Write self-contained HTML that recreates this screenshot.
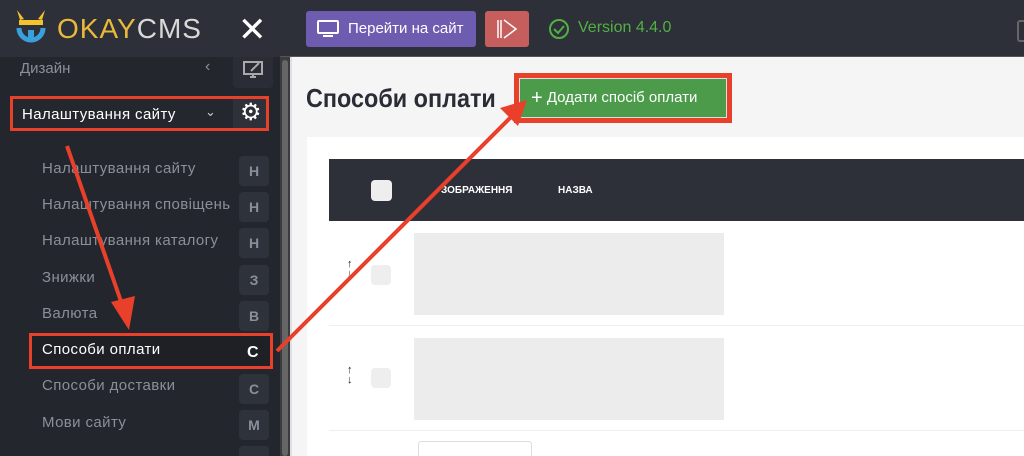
<!DOCTYPE html>
<html><head><meta charset="utf-8"><style>
*{margin:0;padding:0;box-sizing:border-box}
html,body{width:1024px;height:456px;overflow:hidden}
body{background:#f5f5f5;font-family:"Liberation Sans","DejaVu Sans",sans-serif;position:relative}
.abs{position:absolute}
#side{left:0;top:0;width:280px;height:456px;background:#23262d}
#top{left:280px;top:0;width:744px;height:57px;background:#2d3039;border-bottom:1px solid #555}
.item{position:absolute;left:42px;font-size:15px;letter-spacing:0.4px;color:#8a8f9a}
.key{position:absolute;left:239px;width:30px;height:30px;background:#2e323b;border-radius:4px;color:#8a8f9a;font-weight:bold;font-size:14px;text-align:center;line-height:30px}
</style></head><body>
<div id="side" class="abs"></div>
<div class="abs" style="left:0;top:0;width:280px;height:57px;background:#2d3039"></div>
<svg class="abs" style="left:14px;top:8px" width="34" height="40" viewBox="0 0 34 40">
<path d="M3 2 L10 11 L6 12 Z M31 2 L24 11 L28 12 Z" fill="#f2c12e"/>
<rect x="5" y="12" width="24" height="5" fill="#f2c12e"/>
<path d="M5 20 A12 12 0 1 0 29 20" fill="none" stroke="#3aa0dc" stroke-width="5"/>
<rect x="14" y="22" width="6" height="10" fill="#3aa0dc"/>
</svg>
<div class="abs" style="left:57px;top:13px;font-size:28px;letter-spacing:1px"><span style="color:#e9b93a">OKAY</span><span style="color:#d8d8d8">CMS</span></div>
<div class="abs" style="left:238px;top:10px;color:#fff;font-size:34px;line-height:40px">✕</div>
<div class="abs" style="left:20px;top:60px;font-size:15px;color:#8a8f9a">Дизайн</div>
<div class="abs" style="left:205px;top:58px;font-size:16px;color:#8a8f9a">‹</div>
<div class="abs" style="left:233px;top:57px;width:40px;height:31px;background:#2a2d35;border-radius:0 0 4px 4px"></div>
<svg class="abs" style="left:242px;top:60px" width="22" height="20" viewBox="0 0 22 20"><rect x="2" y="2" width="18" height="12" fill="none" stroke="#aaa" stroke-width="2"/><path d="M8 17h6M11 14v3M9 11l8-8" stroke="#aaa" stroke-width="2"/></svg>
<div class="abs" style="left:10px;top:96px;width:259px;height:35px;border:3px solid #e8402a;background:#24272e"></div>
<div class="abs" style="left:22px;top:106px;color:#fff;font-size:15px;letter-spacing:0.4px">Налаштування сайту</div>
<div class="abs" style="left:205px;top:104px;color:#ccc;font-size:13px">⌄</div>
<div class="abs" style="left:233px;top:99px;width:33px;height:29px;background:#2e313a"></div>
<div class="abs" style="left:240px;top:99px;color:#fff;font-size:24px;line-height:28px">⚙</div>
<div class="item" style="top:160px">Налаштування сайту</div><div class="key" style="top:156px">Н</div>
<div class="item" style="top:196px">Налаштування сповіщень</div><div class="key" style="top:192px">Н</div>
<div class="item" style="top:232px">Налаштування каталогу</div><div class="key" style="top:228px">Н</div>
<div class="item" style="top:269px">Знижки</div><div class="key" style="top:265px">З</div>
<div class="item" style="top:305px">Валюта</div><div class="key" style="top:301px">В</div>
<div class="abs" style="left:29px;top:333px;width:244px;height:36px;border:3px solid #e8402a;background:#1e2026"></div>
<div class="item" style="top:341px;color:#fff">Способи оплати</div><div class="abs" style="left:247px;top:344px;color:#fff;font-weight:bold;font-size:16px">С</div>
<div class="item" style="top:377px">Способи доставки</div><div class="key" style="top:374px">С</div>
<div class="item" style="top:414px">Мови сайту</div><div class="key" style="top:410px">М</div>
<div class="key" style="top:446px"></div>
<div class="abs" style="left:280px;top:57px;width:10px;height:399px;background:#3a3c42"></div>
<div class="abs" style="left:282px;top:60px;width:6px;height:396px;background:#666;border-radius:3px"></div>
<div class="abs" style="left:290px;top:57px;width:2px;height:399px;background:#e0e0e0"></div>
<div id="top" class="abs"></div>
<div class="abs" style="left:306px;top:11px;width:170px;height:36px;background:#6e5cb0;border-radius:3px;color:#fff;font-size:15px;line-height:36px;padding-left:42px">Перейти на сайт</div>
<svg class="abs" style="left:317px;top:20px" width="22" height="18"><rect x="1" y="1" width="20" height="12" rx="1" fill="none" stroke="#fff" stroke-width="2"/><path d="M6 16h10" stroke="#fff" stroke-width="2"/></svg>
<div class="abs" style="left:485px;top:11px;width:44px;height:36px;background:#c55e5c;border-radius:3px"></div>
<svg class="abs" style="left:495px;top:18px" width="26" height="22"><path d="M3 2v18M6 2v18M9 2l12 9-12 9" fill="none" stroke="#fff" stroke-width="1.5"/></svg>
<svg class="abs" style="left:548px;top:18px" width="22" height="22"><circle cx="11" cy="11" r="9" fill="none" stroke="#52b043" stroke-width="2"/><path d="M6 11l4 4 6-7" fill="none" stroke="#52b043" stroke-width="2"/></svg>
<div class="abs" style="left:578px;top:19px;color:#52b043;font-size:16px">Version 4.4.0</div>
<div class="abs" style="left:1017px;top:20px;width:10px;height:22px;border:2px solid #666;border-radius:3px"></div>
<div class="abs" style="left:306px;top:83px;font-size:26px;font-weight:bold;color:#2a2d35;transform:scaleX(0.9);transform-origin:left">Способи оплати</div>
<div class="abs" style="left:514px;top:73px;width:218px;height:50px;background:#e8402a"></div>
<div class="abs" style="left:519px;top:78px;width:208px;height:40px;background:#4b9b4b;border:1px solid #ddd;color:#fff;font-size:15px;line-height:38px;padding-left:11px;white-space:nowrap"><span style="font-size:20px;vertical-align:-2px">+</span>&nbsp;Додати спосіб оплати</div>
<div class="abs" style="left:307px;top:137px;width:717px;height:319px;background:#fff"></div>
<div class="abs" style="left:329px;top:159px;width:695px;height:62px;background:#2d3039"></div>
<div class="abs" style="left:371px;top:180px;width:21px;height:21px;background:#eee;border-radius:4px"></div>
<div class="abs" style="left:441px;top:185px;color:#fff;font-size:10px;font-weight:bold">ЗОБРАЖЕННЯ</div>
<div class="abs" style="left:558px;top:185px;color:#fff;font-size:10px;font-weight:bold">НАЗВА</div>
<div class="abs" style="left:414px;top:233px;width:310px;height:82px;background:#ececec"></div>
<div class="abs" style="left:329px;top:325px;width:695px;height:1px;background:#eee"></div>
<div class="abs" style="left:414px;top:338px;width:310px;height:82px;background:#ececec"></div>
<div class="abs" style="left:329px;top:430px;width:695px;height:1px;background:#eee"></div>
<div class="abs" style="left:418px;top:441px;width:114px;height:20px;border:1px solid #ddd;border-radius:3px"></div>
<div class="abs" style="left:347px;top:259px;font-size:11px;line-height:10px;color:#222;font-weight:bold">↑<br>↓</div>
<div class="abs" style="left:371px;top:265px;width:20px;height:20px;background:#eee;border-radius:4px"></div>
<div class="abs" style="left:347px;top:365px;font-size:11px;line-height:10px;color:#222;font-weight:bold">↑<br>↓</div>
<div class="abs" style="left:371px;top:368px;width:20px;height:20px;background:#eee;border-radius:4px"></div>
<svg class="abs" style="left:0;top:0" width="1024" height="456">
<line x1="67" y1="146" x2="124" y2="310" stroke="#e8402a" stroke-width="4"/>
<path d="M111 302 L135 296 L129 330 Z" fill="#e8402a"/>
<line x1="277" y1="351" x2="512" y2="116" stroke="#e8402a" stroke-width="4"/>
<path d="M500 108 L527 100 L518 126 Z" fill="#e8402a"/>
</svg>
</body></html>
